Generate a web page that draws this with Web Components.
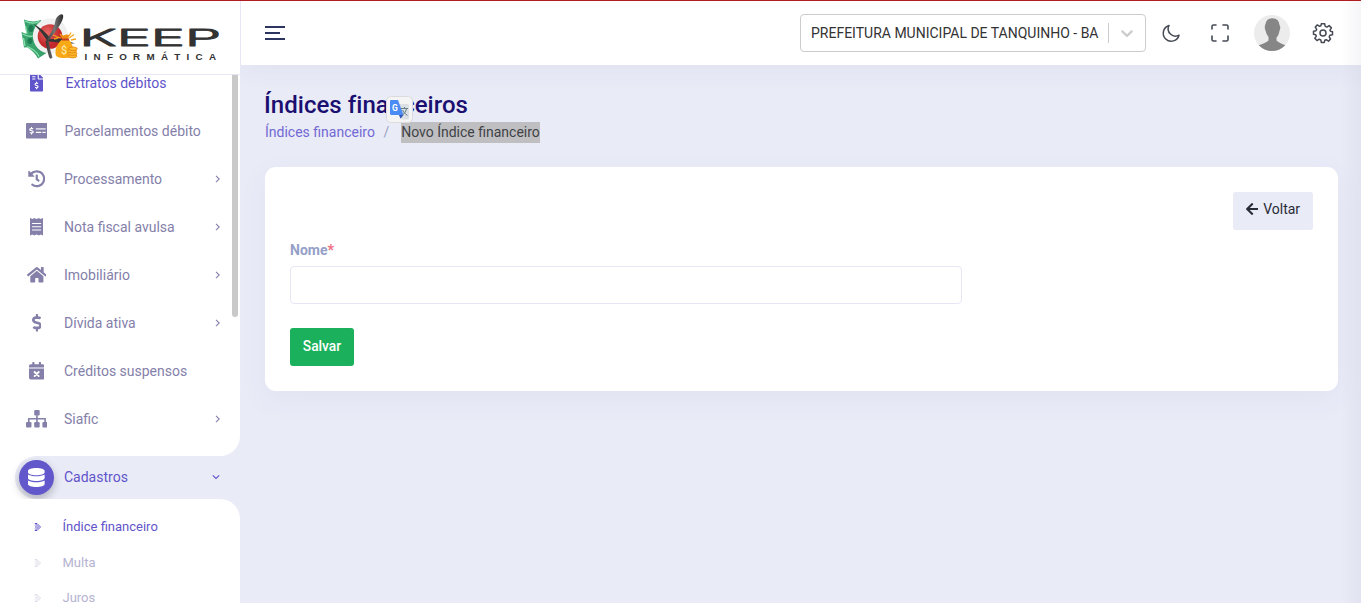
<!DOCTYPE html>
<html lang="pt-BR">
<head>
<meta charset="utf-8">
<title>Keep Informática</title>
<style>
html,body{margin:0;height:100%;overflow:hidden}
body{font-family:Roboto,"Liberation Sans",sans-serif;font-size:14px;color:#333;background:#e9ebf7}
</style>
</head>
<body>
<keep-app></keep-app>
<script>
const ICONS={
invoice:[384,'<path d="M377 105L279.1 7c-4.5-4.5-10.6-7-17-7H256v128h128v-6.1c0-6.3-2.5-12.4-7-16.9zm-153 31V0H24C10.7 0 0 10.7 0 24v464c0 13.3 10.7 24 24 24h336c13.3 0 24-10.7 24-24V160H248c-13.2 0-24-10.8-24-24zM64 72c0-4.42 3.58-8 8-8h80c4.42 0 8 3.58 8 8v16c0 4.42-3.58 8-8 8H72c-4.42 0-8-3.58-8-8V72zm0 80v-16c0-4.42 3.58-8 8-8h80c4.42 0 8 3.58 8 8v16c0 4.42-3.58 8-8 8H72c-4.42 0-8-3.58-8-8zm144 263.88V440c0 4.42-3.58 8-8 8h-16c-4.42 0-8-3.58-8-8v-24.29c-11.29-.58-22.27-4.52-31.37-11.35-3.9-2.93-4.1-8.77-.57-12.14l11.75-11.21c2.77-2.64 6.89-2.76 10.13-.73 3.87 2.42 8.26 3.72 12.82 3.72h28.11c6.5 0 11.8-5.92 11.8-13.19 0-5.95-3.61-11.19-8.77-12.73l-45-13.5c-18.59-5.58-31.58-23.42-31.58-43.39 0-24.52 19.05-44.44 42.67-45.07V232c0-4.42 3.58-8 8-8h16c4.42 0 8 3.58 8 8v24.29c11.29.58 22.27 4.51 31.37 11.35 3.9 2.93 4.1 8.77.57 12.14l-11.75 11.21c-2.77 2.64-6.89 2.76-10.13.73-3.87-2.43-8.26-3.72-12.82-3.72h-28.11c-6.5 0-11.8 5.92-11.8 13.19 0 5.95 3.61 11.19 8.77 12.73l45 13.5c18.59 5.58 31.58 23.42 31.58 43.39 0 24.53-19.05 44.44-42.67 45.07z"/>'],
check:[640,'<rect y="32" width="640" height="448" rx="22"/><g fill="#fff"><g transform="translate(94 148) scale(.46 .42)"><path d="M209.2 233.4l-108-31.6C88.7 198.2 80 186.5 80 173.5c0-16.3 13.2-29.5 29.5-29.5h66.3c12.2 0 24.2 3.7 34.2 10.5 6.1 4.1 14.3 3.1 19.5-2l34.8-34c7.1-6.9 6.1-18.4-1.8-24.5C238 74.8 207.4 64.1 176 64V16c0-8.8-7.2-16-16-16h-32c-8.8 0-16 7.2-16 16v48h-2.5C45.8 64-5.4 118.7.5 183.6c4.2 46.1 39.4 83.6 83.8 96.6l102.5 30c12.5 3.7 21.2 15.3 21.2 28.3 0 16.3-13.2 29.5-29.5 29.5h-66.3C100 368 88 364.3 78 357.5c-6.1-4.1-14.3-3.1-19.5 2l-34.8 34c-7.1 6.9-6.1 18.4 1.8 24.5 24.5 19.2 55.1 29.9 86.5 30v48c0 8.8 7.2 16 16 16h32c8.8 0 16-7.2 16-16v-48.2c46.6-.9 90.3-28.6 105.7-72.7 21.5-61.6-14.6-124.8-72.5-141.7z"/></g><rect x="288" y="176" width="288" height="48" rx="8" opacity=".65"/><rect x="288" y="288" width="160" height="32" rx="8"/><rect x="480" y="288" width="96" height="32" rx="8"/></g>'],
history:[512,'<path d="M504 255.531c.253 136.64-111.18 248.372-247.82 248.468-59.015.042-113.223-20.53-155.822-54.911-11.077-8.94-11.905-25.541-1.839-35.607l11.267-11.267c8.609-8.609 22.353-9.551 31.891-1.984C173.062 425.135 212.781 440 256 440c101.705 0 184-82.311 184-184 0-101.705-82.311-184-184-184-48.814 0-93.149 18.969-126.068 49.932l50.754 50.754c10.08 10.08 2.941 27.314-11.313 27.314H24c-8.837 0-16-7.163-16-16V38.627c0-14.254 17.234-21.393 27.314-11.314l49.372 49.372C129.209 34.136 189.552 8 256 8c136.81 0 247.747 110.78 248 247.531zm-180.912 78.784l9.823-12.63c8.138-10.463 6.253-25.542-4.21-33.679L288 256.349V152c0-13.255-10.745-24-24-24h-16c-13.255 0-24 10.745-24 24v135.651l65.409 50.874c10.463 8.137 25.541 6.253 33.679-4.21z"/>'],
receipt:[384,'<path d="M0 16C0 1 13-4 24 4l40 28 54-28q10-6 20 0l54 28 54-28q10-6 20 0l54 28 40-28c11-8 24-3 24 12v480c0 15-13 20-24 12l-40-28-54 28q-10 6-20 0l-54-28-54 28q-10 6-20 0l-54-28-40 28c-11 8-24 3-24-12z"/><path fill="none" stroke="#fff" stroke-width="32" stroke-linecap="round" d="M72 160H312M72 256H312M72 352H312"/>'],
home:[576,'<path d="M280.37 148.26L96 300.11V464a16 16 0 0 0 16 16l112.06-.29a16 16 0 0 0 15.92-16V368a16 16 0 0 1 16-16h64a16 16 0 0 1 16 16v95.64a16 16 0 0 0 16 16.05L464 480a16 16 0 0 0 16-16V300L295.67 148.26a12.19 12.19 0 0 0-15.3 0zM571.6 251.47L488 182.56V44.05a12 12 0 0 0-12-12h-56a12 12 0 0 0-12 12v72.61L318.47 43a48 48 0 0 0-61 0L4.34 251.47a12 12 0 0 0-1.6 16.9l25.5 31A12 12 0 0 0 45.15 301l235.22-193.74a12.19 12.19 0 0 1 15.3 0L530.9 301a12 12 0 0 0 16.9-1.6l25.5-31a12 12 0 0 0-1.7-16.93z"/>'],
dollar:[288,'<path d="M209.2 233.4l-108-31.6C88.7 198.2 80 186.5 80 173.5c0-16.3 13.2-29.5 29.5-29.5h66.3c12.2 0 24.2 3.7 34.2 10.5 6.1 4.1 14.3 3.1 19.5-2l34.8-34c7.1-6.9 6.1-18.4-1.8-24.5C238 74.8 207.4 64.1 176 64V16c0-8.8-7.2-16-16-16h-32c-8.8 0-16 7.2-16 16v48h-2.5C45.8 64-5.4 118.7.5 183.6c4.2 46.1 39.4 83.6 83.8 96.6l102.5 30c12.5 3.7 21.2 15.3 21.2 28.3 0 16.3-13.2 29.5-29.5 29.5h-66.3C100 368 88 364.3 78 357.5c-6.1-4.1-14.3-3.1-19.5 2l-34.8 34c-7.1 6.9-6.1 18.4 1.8 24.5 24.5 19.2 55.1 29.9 86.5 30v48c0 8.8 7.2 16 16 16h32c8.8 0 16-7.2 16-16v-48.2c46.6-.9 90.3-28.6 105.7-72.7 21.5-61.6-14.6-124.8-72.5-141.7z"/>'],
calendar:[448,'<path d="M0 160V112Q0 64 48 64H96V12Q96 0 108 0h40q12 0 12 12V64H288V12Q288 0 300 0h40q12 0 12 12V64h48q48 0 48 48v48zM0 192H448V464q0 48-48 48H48Q0 512 0 464z"/><path fill="none" stroke="#fff" stroke-width="56" stroke-linecap="round" d="M164 292L284 412M284 292L164 412"/>'],
sitemap:[640,'<rect x="240" width="160" height="160" rx="32"/><rect y="352" width="160" height="160" rx="32"/><rect x="240" y="352" width="160" height="160" rx="32"/><rect x="480" y="352" width="160" height="160" rx="32"/><path fill="none" stroke="currentColor" stroke-width="48" stroke-linejoin="round" d="M320 150V360M80 360V256H560V360"/>'],
database:[448,'<path d="M448 73.143v45.714C448 159.143 347.667 192 224 192S0 159.143 0 118.857V73.143C0 32.857 100.333 0 224 0s224 32.857 224 73.143zM448 176v102.857C448 319.143 347.667 352 224 352S0 319.143 0 278.857V176c48.125 33.143 136.208 48.572 224 48.572S399.874 209.143 448 176zm0 160v102.857C448 479.143 347.667 512 224 512S0 479.143 0 438.857V336c48.125 33.143 136.208 48.572 224 48.572S399.874 369.143 448 336z"/>'],
arrow:[448,'<path d="M257.5 445.1l-22.2 22.2c-9.4 9.4-24.6 9.4-33.9 0L7 273c-9.4-9.4-9.4-24.6 0-33.9L201.4 44.7c9.4-9.4 24.6-9.4 33.9 0l22.2 22.2c9.5 9.5 9.3 25-.4 34.3L136.6 216H424c13.3 0 24 10.7 24 24v32c0 13.3-10.7 24-24 24H136.6l120.5 114.8c9.8 9.3 10 24.8.4 34.3z"/>']
};
function define(name,render){
  customElements.define(name,class extends HTMLElement{
    connectedCallback(){
      if(this.shadowRoot)return;
      const t=document.createElement('template');
      t.innerHTML=render(this);
      this.attachShadow({mode:'open'}).append(t.content.cloneNode(true));
    }
  });
}
define('k-icon',el=>{
  const [w,body]=ICONS[el.getAttribute('name')];
  return `<style>:host{display:inline-flex}svg{display:block;height:var(--size,17.5px);width:auto;fill:currentColor}</style><svg viewBox="0 0 ${w} 512">${body}</svg>`;
});
define('k-logo',()=>`
<style>:host{display:flex;box-sizing:border-box;width:240px;height:74px;border-bottom:1px solid #e6e6f5;flex:none}svg{display:block}</style>
<svg width="240" height="73" viewBox="0 1 240 73">
<defs><radialGradient id="r" cx=".4" cy=".35"><stop offset="0" stop-color="#e86a66"/><stop offset="1" stop-color="#c3282c"/></radialGradient>
<linearGradient id="s" x1="0" y1="0" x2="1" y2="0"><stop offset="0" stop-color="#333"/><stop offset=".5" stop-color="#777"/><stop offset="1" stop-color="#2a2a2a"/></linearGradient></defs>
<g fill="#38a16c"><path d="M24 19.500Q33 23 41 20L44 33 27 36Z"/><path d="M21.500 32Q29 36 37 32L40 46 24 47.500Z"/><path d="M25 46L37 40 48 52 38 58.500Q34 51 25 46Z"/></g>
<g fill="none" stroke="#8be4af" stroke-width="1.300"><path d="M25 21Q33 25 39 21.500M22.500 34Q30 38 36 35M27 46.500Q36 50 39 56.500M27 34L25.500 26M25 46L23.500 38"/></g>
<g fill="#1d7b52"><ellipse cx="31" cy="28.500" rx="2.500" ry="3.500"/><ellipse cx="30" cy="41" rx="2.500" ry="3"/></g>
<circle cx="50.500" cy="36" r="17.600" fill="#f1f0f0"/><circle cx="50" cy="36.500" r="12.300" fill="url(#r)"/>
<path d="M33.500 24Q42 28 50.500 38.500L47.500 41Q41 31 33.500 24Z" fill="#353535"/>
<path d="M46 39.500L60 38.500 75 43.500 68 43.500 49 41.500Z" fill="#353535"/>
<path d="M56 18.500Q60 13.500 62.500 14.500 64.500 16 61 23 57 30 48.500 40.500 50 50 52.500 57.500 50.500 60 49 57 47 50 45.500 41.500 54 30 56 18.500Z" fill="url(#s)"/>
<path d="M53 35L56.500 36.500 61 38M54 39L58 38M69 38L74 34.500M71 40L76 39M60 34L62.500 37M69 36L71 32.500" stroke="#f6a51b" stroke-width="1.300"/>
<path d="M60.500 34.500l3 1 3-1 3 .5-1.500 4h-5.500z" fill="#ef8f12"/>
<path d="M62 39.500Q55 45 55.500 54 56 58 63 58 73 58.500 73.500 53 73.500 45 69 39.500Z" fill="#f9a916"/><path d="M62 39.500H69" stroke="#c33b25" stroke-width="2"/>
<text x="61" y="53.500" font-family="Roboto,sans-serif" font-size="11" fill="#fff0b5">$</text>
<g fill="#fdb92b" stroke="#dc7b09" stroke-width=".7"><ellipse cx="72.500" cy="56" rx="4.500" ry="1.900"/><ellipse cx="72.500" cy="53.500" rx="4.500" ry="1.900"/><ellipse cx="72" cy="51" rx="4.500" ry="1.900"/><ellipse cx="73" cy="48.800" rx="4.300" ry="1.800"/></g>
<text x="79.500" y="45.800" font-family="Inter,sans-serif" font-weight="300" font-size="22.800" fill="#333" stroke="#333" stroke-width=".9" stroke-linejoin="round" textLength="141.500" lengthAdjust="spacingAndGlyphs">KEEP</text>
<text x="84.500" y="60" font-family="'Liberation Sans',sans-serif" font-weight="700" font-size="9.800" fill="#333" letter-spacing="6.300">INFORMÁTICA</text>
</svg>`);
define('k-item',el=>`
<style>
:host{display:grid;grid-template-columns:73px 1fr auto;align-items:center;height:48px;flex:none;color:#8480a9;font-size:14px}
:host([active]){color:#5f54ca}
.i{display:flex;justify-content:center}
.t{margin-left:-9px;white-space:nowrap}
:host([icon=invoice]) .t{margin-left:-7.500px}
:host([icon=check]) .t{margin-left:-8.500px}
svg{display:block;margin-right:18px}
:host([open]){height:43px;margin-left:15px;grid-template-columns:43px 1fr auto;background:#e9ebf7;border-radius:22px 0 0 22px}
:host([open]) .i{--size:19px;box-sizing:border-box;width:35px;height:35px;margin-left:4px;align-items:center;background:#6258cb;color:#fff;border-radius:50%;box-shadow:0 4px 8px rgba(0,0,0,.25)}
:host([open]) .t{margin-left:6px;padding-bottom:2px}
:host([open]) svg{margin-right:20px;margin-bottom:1px}
</style>
<span class="i"><k-icon name="${el.getAttribute('icon')}"></k-icon></span><span class="t"><slot></slot></span>
${el.hasAttribute('arrow')?`<svg width="8" height="8" viewBox="0 0 8 8" fill="none" stroke="currentColor" stroke-width="1.100"><path d="${el.hasAttribute('open')?'M.8 2.300L4 5.500 7.200 2.300':'M2 .8L5.200 4 2 7.200'}"/></svg>`:''}`);
define('k-sub',()=>`
<style>:host{display:grid;grid-template-columns:33px 1fr;align-items:center;height:36px;color:#b5b3d1;font-size:13px;--a:#dedcea}
:host([active]){color:#5f54ca;--a:#5f54ca}span{margin-left:29.500px}svg{margin:1px 0 0 33.500px}</style>
<svg width="8" height="10" viewBox="0 0 8 10" fill="none" stroke="var(--a)" stroke-width="1"><path d="M1 1.500H3L6.500 5 3 8.500H1L4.500 5ZM1 3.500L2.500 5 1 6.500"/></svg><span><slot></slot></span>`);
define('k-sidebar',()=>`
<style>
:host{display:flex;flex-direction:column;position:relative;z-index:1;width:240px;height:602px;flex:none;overflow:hidden;background:linear-gradient(90deg,#fff 50%,#e9ebf7 50%)}
.logo{background:#fff}
nav{display:flex;flex-direction:column;height:528px;overflow:hidden}
.a{flex:none;height:381px;box-sizing:border-box;background:#fff;border-bottom-right-radius:20px;overflow:hidden}
.a div{margin-top:-16px}
.b{flex:none;background:#fff;border-top-right-radius:20px;padding-top:9px;height:130px}
.b k-sub:last-child{height:34px}
.bar{position:absolute;right:2px;top:74px;width:6px;height:242px;background:#c9c9c9;border-radius:0 0 3px 3px}
</style>
<k-logo class="logo"></k-logo>
<nav><div class="a"><div>
<k-item icon="invoice" active>Extratos débitos</k-item>
<k-item icon="check">Parcelamentos débito</k-item>
<k-item icon="history" arrow>Processamento</k-item>
<k-item icon="receipt" arrow>Nota fiscal avulsa</k-item>
<k-item icon="home" arrow>Imobiliário</k-item>
<k-item icon="dollar" arrow>Dívida ativa</k-item>
<k-item icon="calendar">Créditos suspensos</k-item>
<k-item icon="sitemap" arrow>Siafic</k-item>
</div></div>
<k-item icon="database" arrow open active>Cadastros</k-item>
<div class="b"><k-sub active>Índice financeiro</k-sub><k-sub>Multa</k-sub><k-sub>Juros</k-sub></div></nav>
<div class="bar"></div>`);
define('k-select',()=>`
<style>:host{display:flex;align-items:center;box-sizing:border-box;width:346px;height:38px;border:1px solid #ccc;border-radius:4px;background:#fff;color:#333;font-size:14px;padding-left:10px}
.v{flex:1;white-space:nowrap}i{width:1px;height:20px;background:#ccc}svg{margin:0 8px}</style>
<span class="v"><slot></slot></span><i></i><svg width="20" height="20" viewBox="0 0 20 20" fill="#ccc"><path d="M4.516 7.548c.436-.446 1.043-.481 1.576 0L10 11.295l3.908-3.747c.533-.481 1.141-.446 1.574 0 .436.445.408 1.197 0 1.615l-4.695 4.502c-.217.223-.502.335-.787.335s-.57-.112-.789-.335L4.516 9.163c-.408-.418-.436-1.170 0-1.615z"/></svg>`);
define('k-topbar',()=>`
<style>:host{display:flex;align-items:center;height:64px;box-sizing:border-box;background:#fff;border-left:1px solid #e6e6f5;padding:0 27px 0 24px;box-shadow:0 0 30px rgba(70,75,120,.08);position:relative;color:#454a54}
svg{display:block;flex:none}.m{margin-right:auto}.moon{margin-left:15px}.full{margin-left:29px}.av{margin-left:24px}.gear{margin-left:22px}</style>
<svg class="m" width="21" height="16" viewBox="0 0 21 16" stroke="#2b3560" stroke-width="2"><path d="M0 2H20M0 8H15M0 14H20"/></svg>
<k-select>PREFEITURA MUNICIPAL DE TANQUINHO - BA</k-select>
<svg class="moon" width="20" height="20" viewBox="0 0 20 20" fill="none" stroke="currentColor" stroke-width="1.500" stroke-linejoin="round"><path d="M8 2.500A8 8 0 1 0 18 12.200 7.300 7.300 0 0 1 8 2.500Z"/></svg>
<svg class="full" width="20" height="20" viewBox="0 0 20 20" fill="none" stroke="currentColor" stroke-width="1.600" stroke-linecap="round"><path d="M2 6V3.500Q2 2 3.500 2H6M13 2H16.500Q18 2 18 3.500V6M18 13V16.500Q18 18 16.500 18H13M6 18H3.500Q2 18 2 16.500V13"/></svg>
<svg class="av" width="36" height="36" viewBox="0 0 36 36"><defs><clipPath id="c"><circle cx="18" cy="18" r="18"/></clipPath></defs><g clip-path="url(#c)"><path fill="#ececec" d="M0 0H36V36H0Z"/><path fill="#868686" d="M11.500 9Q12.500 3 18.500 3.200 25 3.500 25.500 10 27 12 25.600 15.500 24.500 21 22.500 22.500V25.500Q25 28 32 30.500V36H4V30.500Q12 28 14.500 25.500V22Q12.500 20 11.500 15.500 10 12 11.500 9Z"/></g></svg>
<svg class="gear" width="22" height="22" viewBox="0 0 22 22" fill="none" stroke="currentColor" stroke-width="1.500" stroke-linejoin="round"><circle cx="11" cy="11" r="3"/><path d="M9.300 1.800H12.700L13.200 4.400 14.900 5.100 17.100 3.600 19.400 5.900 17.900 8.100 18.500 9.200 20.500 9.700V12.800L17.900 13.300 17.200 14.800 18.500 17 16.500 19.200 14.200 17.700 12.800 18.200 12.300 20.400H9.300L8.800 17.900 7.200 17.200 5 18.600 2.800 16.300 4.300 14.100 3.700 12.800 1.500 12.300V9.300L4 8.700 4.700 7.300 3.300 5 5.400 2.900 7.600 4.300 8.900 3.800Z"/></svg>`);
define('k-heading',()=>`
<style>:host{display:block;position:relative;height:76px}
h1{margin:0 0 0 -1px;font-size:24px;line-height:29px;font-weight:500;color:#1a0f70;letter-spacing:.03px}
p{margin:2px 0 0;display:flex;line-height:21px;font-size:14px;color:#7168d4}i{font-style:normal;color:#9aa2c0;margin:0 12px 0 8.500px}mark{background:#bfbfc2;color:#3f4246}
.tr{position:absolute;left:121px;top:5px}</style>
<h1>Índices financeiros</h1><p>Índices financeiro<i>/</i><mark>Novo Índice financeiro</mark></p>
<svg class="tr" width="28" height="28" viewBox="0 0 28 28"><rect x=".5" y=".5" width="26" height="26" rx="4" fill="#f4f4f4" stroke="#dbdbdf"/><path d="M12 8H21.500Q23 8 23 9.500V22Q23 23.500 21.500 23.500H16Z" fill="#dcdfe3"/><path d="M13 19H17.500L14.500 22.800Z" fill="#3156b8"/><path d="M5 4H12L17.500 19H5.500Q4 19 4 17.500V5Q4 4 5 4Z" fill="#4b8bf4"/><text x="6" y="14.500" font-family="Roboto,sans-serif" font-size="8.500" font-weight="700" fill="#fff">G</text><path d="M15 12.500H22M18.500 11V12.500M20.700 12.500Q19.500 17 16.500 19M16.500 14Q18 17.500 21.500 19.500" fill="none" stroke="#67818a" stroke-width="1"/></svg>`);
define('k-button',()=>`
<style>:host{display:inline-flex;align-items:center;justify-content:center;box-sizing:border-box;height:38px;width:64px;padding-bottom:2px;border-radius:3px;background:#1bb05b;color:#fff;font-size:13.800px;font-weight:500;white-space:nowrap;gap:4px;--size:14px}
:host([light]){width:80px;background:#e9ebf7;color:#282c38;font-size:14px;font-weight:400;padding-bottom:4px;gap:5px}</style><slot></slot>`);
define('k-field',()=>`
<style>:host{display:block;width:672px}label{display:block;font-weight:700;font-size:14px;line-height:20px;color:#95a0c8}b{color:#f07584}input{display:block;box-sizing:border-box;width:100%;height:38px;margin-top:6px;border:1px solid #e6e6f5;border-radius:4px;background:#fff;outline:0}</style>
<label><slot></slot><b>*</b></label><input>`);
define('k-card',()=>`
<style>:host{display:flex;flex-direction:column;box-sizing:border-box;height:224px;padding:25px;background:#fff;border-radius:11px;box-shadow:0 8px 30px rgba(70,80,140,.05);align-items:flex-start}</style><slot></slot>`);
define('keep-app',()=>`
<style>:host{display:flex;box-sizing:border-box;height:603px;border-top:1px solid #b01c20;position:relative;overflow:hidden;background:#e9ebf7}
.right{flex:1;min-width:0}main{padding:26px 23px 0 25px}
k-field{margin:10px 0 24px}.back{align-self:flex-end}
.edge{position:absolute;right:0;top:0;width:20px;height:100%;background:linear-gradient(90deg,rgba(70,70,110,0),rgba(70,70,110,.05))}</style>
<k-sidebar></k-sidebar>
<div class="right"><k-topbar></k-topbar><main><k-heading></k-heading>
<k-card><k-button light class="back"><k-icon name="arrow"></k-icon>Voltar</k-button><k-field>Nome</k-field><k-button>Salvar</k-button></k-card></main></div>
<div class="edge"></div>`);
</script>
</body>
</html>
